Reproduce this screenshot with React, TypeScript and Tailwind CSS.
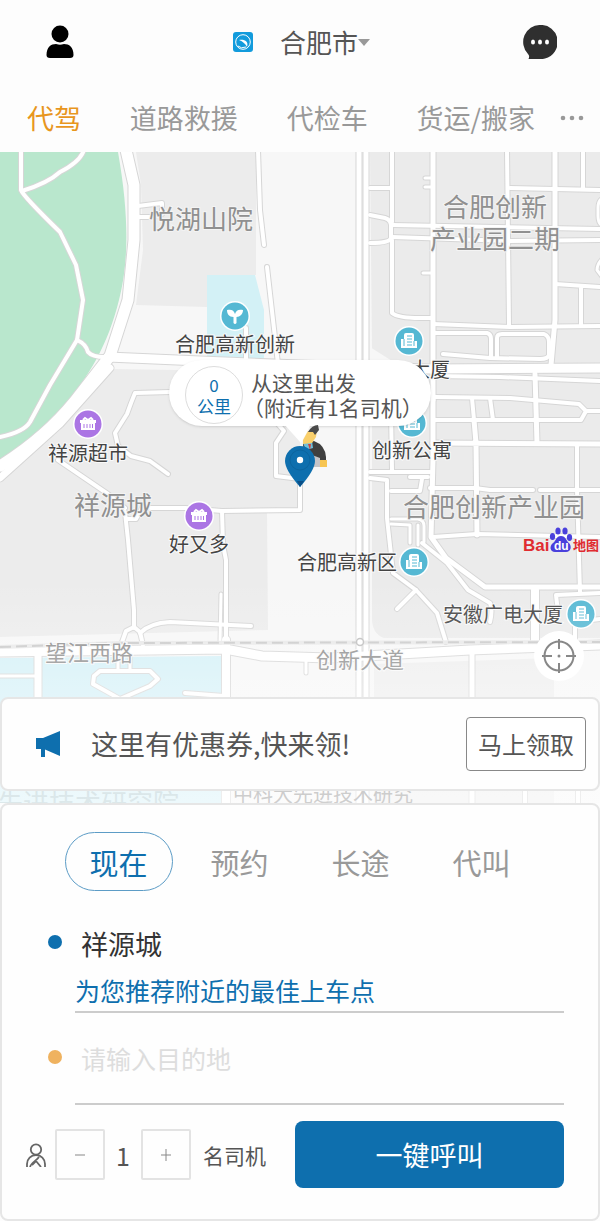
import { useState } from "react";

type Road = [d: string, width: number];

const blocks = [
    { d: "M136 152H256V275H207V307L136 305L143 250L141 185Z", fill: "#ececec" },
    { d: "M112 369L300 372V510L267 513L268 630L0 637V482L60 430Z", fill: "#ececec" },
    { d: "M370 152H600V638H384Q372 634 372 618V350Z", fill: "#ebebeb" },
    { d: "M370 347L400 366H370Z", fill: "#f7f7f7" },
    { d: "M374 664L554 658V804H374Z", fill: "#eeeeee" },
    { d: "M207 275H255L264 310V358H207Z", fill: "#d3f1f6" },
    { d: "M0 658L222 656V804H0Z", fill: "#d3f0f7" },
    { d: "M0 152H118C130 220 128 265 119 300C108 345 88 378 62 408C44 428 22 446 0 461Z", fill: "#b9e7cd" },
];

const roads: Road[] = [
    // park
    ["M21 150V190Q23 196 60 232L76 265L83 300L77 340L50 385L30 422Q24 432 0 437", 4],
    ["M22 191Q48 183 60 172Q80 162 84 150", 4],
    ["M77 340Q86 344 88 352Q92 357 105 357", 4],
    // west side
    ["M258 150L260 210L264 245", 4],
    ["M267 267L278 364", 4],
    ["M246 328V362", 4],
    ["M138 206L162 203V214", 4],
    ["M138 217H154", 4],
    ["M170 392L135 393L131 403L127 414L115 433L118 446L131 456L150 461L168 474", 4],
    ["M58 460L108 494L125 508", 4],
    ["M150 508L185 508L222 511L300 510V478", 4],
    ["M222 511L223 545L226 560V640", 4],
    ["M125 512L128 540L134 610V628", 4],
    ["M142 508L136 519H126", 4],
    ["M221 594L220 642", 3],
    ["M251 626L170 622Q150 623 140 633", 4],
    ["M121 645L126 631L134 627L140 632L143 645", 4],
    ["M276 422L284 431L276 443V476L300 479", 4],
    ["M38 652V700", 7],
    ["M0 676H36", 3],
    ["M100 671H150L158 679L150 686L120 699L93 684L94 676Z", 4],
    ["M118 652V671M130 652V671", 3],
    ["M185 693L224 696", 4],
    // east side
    ["M370 188H392", 4],
    ["M370 215L385 218Q392 220 391 228V238Q390 243 370 243", 4],
    ["M392 150V222M392 240V313Q398 318 420 318H433", 4],
    ["M392 225L600 229M392 237L510 241L600 240", 4],
    ["M425 178H433M425 187H433M423 273H433", 3],
    ["M507 150L509 325", 4],
    ["M583 150V188M510 188L600 190M555 284L600 287M581 286V326", 4],
    ["M603 198Q598 200 598 208V216Q598 224 603 226M603 258Q597 264 597 270L603 278", 3],
    ["M555 150L555 320L551 365", 5],
    ["M433 324L510 327L600 326", 4],
    ["M433 333H487Q491 334 491 339V358M497 358V338Q497 334 502 334H544Q549 336 549 342V355Q548 359 540 359L490 358L443 354", 4],
    ["M433 376L500 377L600 381", 4],
    ["M535 374L537 443", 5],
    ["M435 397L510 398L579 404L586 411L581 420H435M586 411H600", 4],
    ["M472 398L474 420M490 398L493 420", 4],
    ["M433 443L600 444M474 420L476 443L477 535", 5],
    ["M370 472H430M391 410L392 470", 4],
    ["M410 477H428M422 479L420 491L391 491", 4],
    ["M430 488L475 488L490 490H533M540 490L600 490", 4],
    ["M577 445V490L580 592", 4],
    ["M433 537L477 534L600 537", 4],
    ["M391 519H418Q424 520 424 526V542M391 524L410 525V543M418 525V545", 3],
    ["M370 478L387 480V518L393 573L416 590L437 613L446 642", 4],
    ["M416 590L397 609", 4],
    ["M422 543L447 563L468 590L490 603Q493 610 490 622", 4],
    ["M433 400V460L431 537L446 558L485 587H600", 5],
    ["M433 150V400", 5],
    ["M535 590V644", 8],
    ["M600 593L556 595L558 612M575 640V622L600 619", 4],
    ["M472 652V804", 5],
    ["M525 760V804M578 760V804", 4],
    ["M306 655V673", 3],
    // trunk roads
    ["M226 640V804", 8],
    ["M359 150V804", 5],
    ["M366 150V804", 5],
    ["M110 368L60 424L0 478", 7],
    ["M126 150L134 185V240L128 300L110 356L75 401Q45 438 0 466", 11],
    ["M108 357L200 361L300 365L430 369L600 368", 9],
    ["M0 652L225 649L262 656L330 658L470 650L600 645", 9],
];

const areas = [
    { text: "悦湖山院", x: 149, y: 229 },
    { text: "合肥创新", x: 443, y: 217 },
    { text: "产业园二期", x: 430, y: 249 },
    { text: "祥源城", x: 74, y: 515 },
    { text: "合肥创新产业园", x: 403, y: 517 },
];

const streets = [
    { text: "望江西路", x: 45, y: 661 },
    { text: "创新大道", x: 316, y: 668 },
];

const places = [
    { text: "合肥高新创新", x: 175, y: 352, icon: "sprout", cx: 235, cy: 316 },
    { text: "大厦", x: 410, y: 377, icon: "office", cx: 409, cy: 341 },
    { text: "祥源超市", x: 48, y: 461, icon: "shop", cx: 88, cy: 424 },
    { text: "创新公寓", x: 372, y: 458, icon: "office", cx: 412, cy: 423 },
    { text: "好又多", x: 169, y: 552, icon: "shop", cx: 199, cy: 516 },
    { text: "合肥高新区", x: 297, y: 570, icon: "office", cx: 414, cy: 562 },
    { text: "安徽广电大厦", x: 443, y: 622, icon: "office", cx: 581, cy: 614 },
];

const services = ["代驾", "道路救援", "代检车", "货运/搬家"];
const modes = ["现在", "预约", "长途", "代叫"];

function PlaceIcon({ icon, cx, cy }: { icon: string; cx: number; cy: number }) {
    return (
        <g transform={`translate(${cx} ${cy})`}>
            <circle r="15" fill="#fff" />
            <circle r="13.5" fill={icon === "shop" ? "#ab75e4" : "#55b8d3"} />
            {icon === "sprout" && (
                <path d="M-1.500 1C-6 1-8-2-8-6C-4-7-1-6 0-2C1-6 4-7 8-6C8-2 5 1 1.500 1V7Q0 9-1.500 7Z" fill="#fff" />
            )}
            {icon === "office" && (
                <>
                    <path d="M-8 7V-2H-5V-6Q-5-8-3-8H3Q5-8 5-6V0H8V7Z" fill="#fff" />
                    <path d="M-5-2V5M-2-5H3M-2-2H3M-2 1H3M-2 4H3M5 0V5" stroke="#55b8d3" />
                </>
            )}
            {icon === "shop" && (
                <>
                    <path d="M-8-4H8V-1H7V6H-7V-1H-8Z" fill="#fff" />
                    <path d="M-5-4L-3-6L0-4L3-6L5-4" stroke="#fff" strokeWidth="2" fill="none" />
                    <path d="M-4 0V4M-1 0V4M2 0V4M4.500 0V4" stroke="#ab75e4" />
                </>
            )}
        </g>
    );
}

function BaiduLogo() {
    return (
        <g fontWeight="700">
            <text x="523" y="551" fontSize="17" fill="#e02b30" fontFamily="Liberation Sans, sans-serif">Bai</text>
            <g fill="#4a40dc">
                <ellipse cx="552.500" cy="536.500" rx="2.600" ry="3.600" />
                <ellipse cx="558" cy="531" rx="2.600" ry="3.600" />
                <ellipse cx="565" cy="531" rx="2.600" ry="3.600" />
                <ellipse cx="569.500" cy="537.500" rx="2.600" ry="3.400" />
                <path d="M561 536C566 536 566 541 569 543C572 546 571 552 566 552H555C550 552 549 546 553 543C556 541 556 536 561 536Z" />
            </g>
            <text x="554" y="550" fontSize="12" fill="#fff" fontFamily="Liberation Sans, sans-serif">du</text>
            <text x="573" y="550" fontSize="13" fill="#e02b30">地图</text>
        </g>
    );
}

function CityMap() {
    return (
        <svg
            className="absolute inset-0 h-full w-full"
            viewBox="0 152 600 651"
            preserveAspectRatio="xMidYMin slice"
            role="img"
            aria-label="地图"
        >
            <defs>
                <linearGradient id="fade" x1="0" y1="0" x2="0" y2="1">
                    <stop offset="0" stopColor="#fff" stopOpacity="0" />
                    <stop offset="0.500" stopColor="#fff" stopOpacity="0.350" />
                    <stop offset="1" stopColor="#fff" stopOpacity="0.600" />
                </linearGradient>
            </defs>
            <rect y="152" width="600" height="652" fill="#f7f7f7" />
            {blocks.map((block) => (
                <path key={block.d} d={block.d} fill={block.fill} />
            ))}
            <g fill="none" stroke="#d6d6d6" strokeLinecap="round" strokeLinejoin="round">
                {roads.map(([d, width]) => (
                    <path key={d} d={d} strokeWidth={width + 2} />
                ))}
            </g>
            <g fill="none" stroke="#fff" strokeLinecap="round" strokeLinejoin="round">
                {roads.map(([d, width]) => (
                    <path key={d} d={d} strokeWidth={width} />
                ))}
            </g>
            <path d="M0 647L120 643L600 642" fill="none" stroke="#e8e8e8" strokeWidth="4" />
            <path d="M0 647L120 643L600 642" fill="none" stroke="#c8c8c8" strokeWidth="2" strokeDasharray="11 5" />
            <circle cx="360" cy="642" r="3.500" fill="#fff" stroke="#bbb" strokeWidth="1.500" />

            <g fontSize="26" fill="#909090" stroke="#f4f4f4" strokeWidth="2" paintOrder="stroke">
                {areas.map((area) => (
                    <text key={area.text} x={area.x} y={area.y}>{area.text}</text>
                ))}
            </g>
            <g fontSize="22" fill="#8a8a8a" stroke="#fafafa" strokeWidth="2" paintOrder="stroke">
                {streets.map((street) => (
                    <text key={street.text} x={street.x} y={street.y}>{street.text}</text>
                ))}
            </g>
            {places.map((place) => (
                <PlaceIcon key={place.text} icon={place.icon} cx={place.cx} cy={place.cy} />
            ))}
            <g fontSize="20" fill="#444" stroke="#fafafa" strokeWidth="2" paintOrder="stroke">
                {places.map((place) => (
                    <text key={place.text} x={place.x} y={place.y}>{place.text}</text>
                ))}
            </g>
            <text x="-3" y="813" fontSize="26" fill="#a9c6cc">先进技术研究院</text>
            <text x="233" y="802" fontSize="20" fill="#888">中科大先进技术研究</text>
            <rect y="580" width="600" height="224" fill="url(#fade)" />
            <BaiduLogo />
        </svg>
    );
}

function PickupPin() {
    return (
        <svg className="-mt-px h-[64px] w-[70px]" viewBox="265 425 70 64" aria-hidden="true">
            <path d="M284 424H311L301 443Z" fill="#fff" />
            <path d="M303 444L314 441Q325 445 326 457V466H305Z" fill="#3f3f3f" />
            <path d="M304 452L320 458V467H304Z" fill="#c4c4c8" />
            <path d="M303 443L312 441L313 448L306 450Z" fill="#6fc0dc" />
            <path d="M308 444L311 444L310 450Z" fill="#d8433d" />
            <path d="M308 431L317 430L316 437L312 443L303 444L303 440Z" fill="#f9cf6b" />
            <path d="M308 432Q312 425 318 425L319 430L315 435L313 432Z" fill="#4a4a4a" />
            <rect x="320" y="460" width="7" height="7" fill="#f7c552" />
            <path d="M300 487Q285 470 285 461A15 15 0 0 1 315 461Q315 470 300 487Z" fill="#0e6fae" />
            <path d="M297 481L300 487L304 481Z" fill="#0a4f87" />
            <circle cx="300" cy="460" r="10" fill="none" stroke="#0c659f" />
            <circle cx="300" cy="460" r="3.200" fill="#fff" />
        </svg>
    );
}

function Header() {
    return (
        <header className="grid h-[84px] grid-cols-[1fr_auto_1fr] items-center pr-[43px] pl-[46px]">
            <button type="button" aria-label="个人中心" className="justify-self-start">
                <svg className="h-[34px] w-7" viewBox="0 0 28 34" aria-hidden="true">
                    <ellipse cx="14" cy="9" rx="8.500" ry="8.500" />
                    <path d="M0.500 30C0.500 22 5 19 10 19C13 20 15 20 18 19C23 19 27.500 22 27.500 30Q27.500 33 24 33H4Q0.500 33 0.500 30Z" />
                </svg>
            </button>
            <div className="flex items-center gap-[27px]">
                <svg className="h-5 w-5" viewBox="0 0 20 20" aria-hidden="true">
                    <rect width="20" height="20" rx="3" fill="#129bdc" />
                    <circle cx="10" cy="10" r="7.300" fill="none" stroke="#fff" />
                    <path d="M6 8C11 7 16 9 14 15C12.500 12 10 9.500 6 8Z" fill="#fff" />
                    <path d="M5 14Q8 17 13 15" fill="none" stroke="#fff" />
                </svg>
                <button type="button" className="flex items-center text-[26px] leading-9 text-[#555]">
                    合肥市
                    <svg className="h-[7px] w-3" viewBox="0 0 12 7" aria-hidden="true">
                        <path d="M0 0H12L6 7Z" fill="#999" />
                    </svg>
                </button>
            </div>
            <button type="button" aria-label="消息" className="justify-self-end">
                <svg className="h-[34px] w-[34px]" viewBox="0 0 34 34" aria-hidden="true">
                    <path d="M17 0A16.500 17 0 0 1 22 33.500Q20 34 17 34H5.500Q7 31 5 29A16.500 17 0 0 1 17 0Z" fill="#2f2f2f" />
                    <g fill="#fff">
                        <ellipse cx="10" cy="17" rx="2" ry="2.600" />
                        <ellipse cx="17" cy="17" rx="2" ry="2.600" />
                        <ellipse cx="24" cy="17" rx="2" ry="2.600" />
                    </g>
                </svg>
            </button>
        </header>
    );
}

export default function App() {
    const [service, setService] = useState("代驾");
    const [mode, setMode] = useState("现在");
    const [drivers, setDrivers] = useState(1);

    return (
        <div className="bg-[#fdfdfd] font-['Noto_Sans_CJK_SC',sans-serif] text-[#555]">
            <Header />
            <nav className="flex h-[68px] items-center justify-between pr-4 pl-[27px] text-[27px] leading-9 whitespace-nowrap">
                {services.map((item) => (
                    <button
                        key={item}
                        type="button"
                        onClick={() => setService(item)}
                        className={item === service ? "text-[#e8961e]" : "text-[#999]"}
                    >
                        {item}
                    </button>
                ))}
                <button type="button" aria-label="更多" className="-ml-6">
                    <svg className="h-1.5 w-6" viewBox="0 0 24 6" fill="#999" aria-hidden="true">
                        <circle cx="3" cy="3" r="2.300" />
                        <circle cx="12" cy="3" r="2.300" />
                        <circle cx="21" cy="3" r="2.300" />
                    </svg>
                </button>
            </nav>

            <section className="relative overflow-hidden pb-3">
                <CityMap />
                <div className="relative flex h-[545px] flex-col items-center pt-[208px]">
                    <div className="flex h-[66px] w-[262px] items-center gap-2 rounded-full bg-white pt-1 pl-4 shadow-sm">
                        <div className="flex h-[58px] w-[58px] flex-col items-center justify-center rounded-full border border-[#ddd] text-[17px] leading-[21px] text-[#0e6fae]">
                            <span>0</span>
                            <span>公里</span>
                        </div>
                        <div className="text-[21px] leading-[25px] whitespace-nowrap">
                            <p>从这里出发</p>
                            <p className="-ml-2">（附近有{drivers}名司机）</p>
                        </div>
                    </div>
                    <PickupPin />
                    <button
                        type="button"
                        aria-label="定位"
                        className="absolute right-4 bottom-4 flex h-[50px] w-[50px] items-center justify-center rounded-full bg-white"
                    >
                        <svg className="h-9 w-9" viewBox="0 0 36 36" fill="none" stroke="#888" strokeWidth="2" aria-hidden="true">
                            <circle cx="18" cy="18" r="14.500" />
                            <path d="M18 1V11M18 25V35M1 18H11M25 18H35" />
                            <circle cx="18" cy="18" r="1.500" fill="#888" stroke="none" />
                        </svg>
                    </button>
                </div>
                <div className="relative flex h-[94px] items-center rounded-lg border-2 border-[#e6e6e6] bg-[#fefefe] pr-3 pl-[34px]">
                    <svg className="h-[26px] w-6" viewBox="0 0 24 26" fill="#0e6fae" aria-hidden="true">
                        <path d="M0 7H7L24 0V25L9 18.500V26H5V18H0Z" />
                    </svg>
                    <p className="ml-[31px] flex-1 text-[27px] leading-9">这里有优惠券,快来领!</p>
                    <button
                        type="button"
                        className="h-[54px] w-[120px] rounded-[4px] border border-[#888] bg-white text-[24px] leading-8"
                    >
                        马上领取
                    </button>
                </div>
            </section>

            <main className="rounded-lg border-2 border-[#e6e6e6] bg-[#fefefe] pt-[27px] pb-[31px]">
                <div className="grid grid-cols-4 justify-items-center px-14">
                    {modes.map((item) => (
                        <button
                            key={item}
                            type="button"
                            onClick={() => setMode(item)}
                            className={
                                item === mode
                                    ? "h-[59px] w-[108px] rounded-[30px] border border-[#5c9cc6] text-[29px] leading-10 text-[#0e6fae]"
                                    : "h-[59px] w-[108px] text-[29px] leading-10 text-[#999]"
                            }
                        >
                            {item}
                        </button>
                    ))}
                </div>

                <div className="mt-8 mr-[34px] ml-[46px] grid grid-cols-[27px_1fr]">
                    <span className="mt-3 h-3.5 w-3.5 rounded-full bg-[#0e6fae]" />
                    <div className="border-b-2 border-[#ccc]">
                        <p className="pl-1.5 text-[27px] leading-[42px] text-[#333]">祥源城</p>
                        <p className="pt-1 text-[25px] leading-[42px] text-[#0e6fae]">为您推荐附近的最佳上车点</p>
                    </div>
                    <span className="mt-[37px] h-3.5 w-3.5 rounded-full bg-[#efb25f]" />
                    <div className="border-b-2 border-[#ccc]">
                        <input
                            type="text"
                            aria-label="目的地"
                            placeholder="请输入目的地"
                            className="h-[90px] w-full bg-transparent pl-1.5 text-[25px] outline-none placeholder:text-[#ddd]"
                        />
                    </div>
                </div>

                <div className="mt-4 mr-[34px] ml-6 flex items-center text-[21px] leading-7">
                    <svg className="h-6 w-5" viewBox="0 0 20 24" fill="none" stroke="#666" strokeWidth="1.800" aria-hidden="true">
                        <circle cx="10" cy="6.500" r="5.200" />
                        <path d="M1 24V21C1 16 5 12 10 12C15 12 19 16 19 21V24M4 24C5 20 10 18 13 14M6 22L10 18L15 24" />
                    </svg>
                    <button
                        type="button"
                        aria-label="减少"
                        onClick={() => setDrivers(Math.max(1, drivers - 1))}
                        className="ml-[9px] flex h-[51px] w-[50px] items-center justify-center rounded-[2px] border-2 border-[#e3e3e3]"
                    >
                        <svg className="h-3 w-3" viewBox="0 0 12 12" stroke="#888" aria-hidden="true">
                            <path d="M1 6H11" />
                        </svg>
                    </button>
                    <span className="w-9 text-center text-[25px]">{drivers}</span>
                    <button
                        type="button"
                        aria-label="增加"
                        onClick={() => setDrivers(drivers + 1)}
                        className="flex h-[51px] w-[50px] items-center justify-center rounded-[2px] border-2 border-[#e3e3e3]"
                    >
                        <svg className="h-3 w-3" viewBox="0 0 12 12" stroke="#888" aria-hidden="true">
                            <path d="M1 6H11M6 0V12" />
                        </svg>
                    </button>
                    <span className="ml-3 shrink-0">名司机</span>
                    <button
                        type="button"
                        className="ml-[29px] h-[67px] flex-1 rounded-lg bg-[#0e6fae] text-[27px] leading-9 text-white"
                    >
                        一键呼叫
                    </button>
                </div>
            </main>
        </div>
    );
}
